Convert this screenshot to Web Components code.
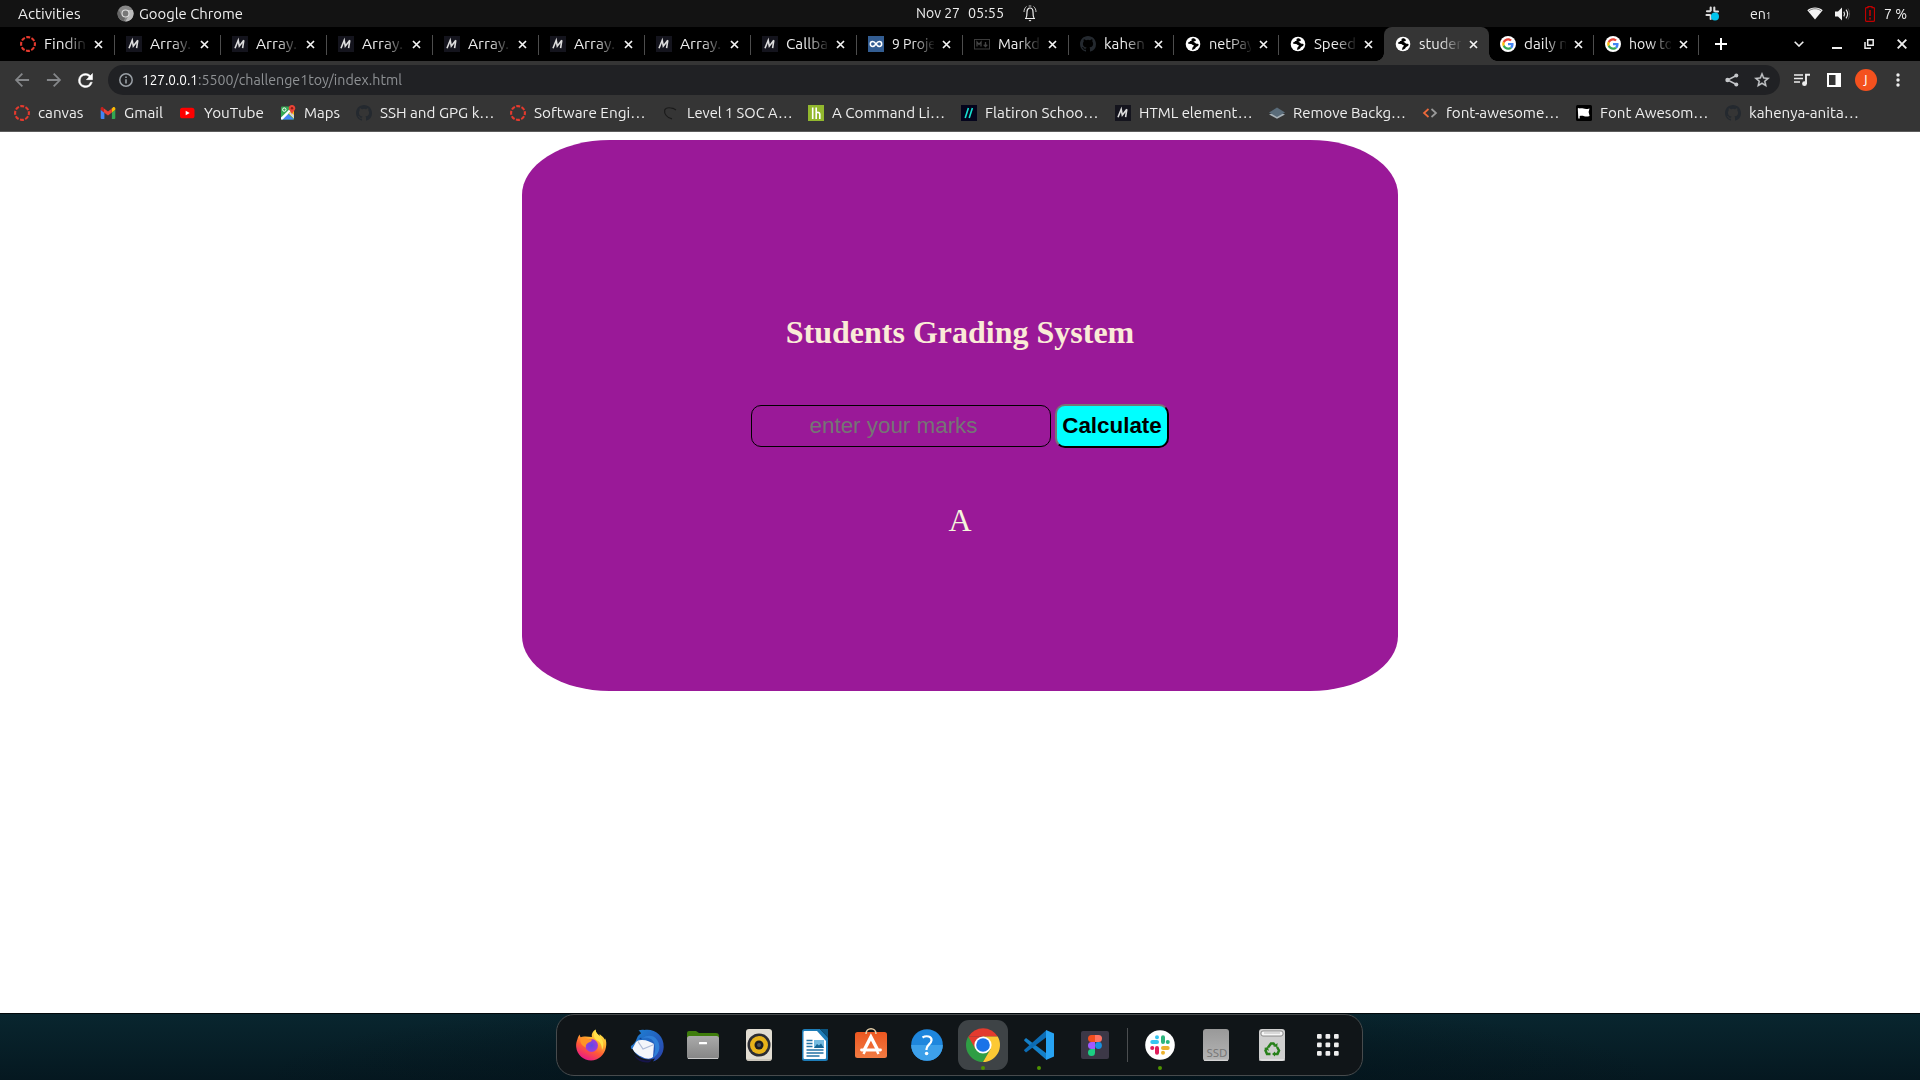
<!DOCTYPE html>
<html lang="en">
<head>
<meta charset="utf-8">
<title>Students Grading System</title>
<style>
html,body{margin:0;height:100%}
body{width:1920px;height:1080px;overflow:hidden;background:#fff;font-family:"Liberation Serif",serif}
</style>
</head>
<body>
<desk-top></desk-top>
<script>
const svg = (w,h,vb,body) => `<svg width="${w}" height="${h}" viewBox="${vb}">${body}</svg>`;

const ring = '<circle cx="8" cy="8" r="6.9" fill="none" stroke="#e63a2e" stroke-width="2.1" stroke-dasharray="4 1.42" stroke-dashoffset="2"/>';
const mdn = '<path fill="#14141d" d="M0 0h16v16H0z"/><path d="M3 12.200 6.200 4.300 7.300 10.200 11.800 4.300 10.600 12.200" fill="none" stroke="#ddd" stroke-width="1.600"/>';
const gh = '<path fill="#24292f" d="M8 0C3.58 0 0 3.58 0 8c0 3.54 2.29 6.53 5.47 7.59.4.07.55-.17.55-.38 0-.19-.01-.82-.01-1.49-2.01.37-2.53-.49-2.69-.94-.09-.23-.48-.94-.82-1.13-.28-.15-.68-.52-.01-.53.63-.01 1.08.58 1.23.82.72 1.21 1.87.87 2.33.66.07-.52.28-.87.51-1.07-1.78-.2-3.64-.89-3.64-3.95 0-.87.31-1.59.82-2.15-.08-.2-.36-1.02.08-2.12 0 0 .67-.21 2.2.82a7.5 7.5 0 0 1 4 0c1.53-1.04 2.2-.82 2.2-.82.44 1.1.16 1.92.08 2.12.51.56.82 1.27.82 2.15 0 3.07-1.87 3.75-3.65 3.95.29.25.54.73.54 1.48 0 1.07-.01 1.93-.01 2.2 0 .21.15.46.55.38A8 8 0 0 0 16 8c0-4.42-3.58-8-8-8z"/>';
const globe = '<circle cx="8" cy="8" r="7.3" fill="#fff"/><path fill="#000" d="M8.2 2.2c-1.4.1-2 .9-1.6 1.8.3.6-.4 1-1.3 1-.6.4-.4 1.2-1.6 1.3-.9.2-.9 1.1-.2 1.4l2.6.3c1.1.2 1.4 1.2 2.6 1.3.5.8-.4 1.4-1 2-.5.5-.3 1.7-.8 2.4 1.7.3 3.1-.7 3.8-2.2.5-1 2.1-1 2.8-2.3.5-1.6-.5-1.4-1.8-1.5-1.3-.1-1.5-1.3-2.6-1.4-.7-.1-.7-.9.2-1 .9 0 1.6-.6 1.6-1.4C10.300 2.900 9.200 2.200 8.200 2.200z"/>';
const google = '<circle cx="8" cy="8" r="8" fill="#fff"/><g transform="translate(2.200 2.200) scale(.242)"><path fill="#EA4335" d="M24 9.500c3.540 0 6.710 1.220 9.210 3.600l6.850-6.850C35.900 2.380 30.470 0 24 0 14.620 0 6.510 5.380 2.560 13.220l7.980 6.190C12.430 13.720 17.740 9.500 24 9.500z"/><path fill="#4285F4" d="M46.980 24.550c0-1.570-.15-3.090-.38-4.550H24v9.020h12.940c-.58 2.960-2.260 5.480-4.780 7.180l7.730 6c4.510-4.180 7.090-10.360 7.090-17.650z"/><path fill="#FBBC05" d="M10.530 28.590A14.500 14.500 0 0 1 9.770 24c0-1.600.27-3.140.76-4.590l-7.980-6.190A23.900 23.900 0 0 0 0 24c0 3.880.92 7.540 2.560 10.780z"/><path fill="#34A853" d="M24 48c6.480 0 11.930-2.130 15.890-5.810l-7.730-6c-2.150 1.450-4.920 2.300-8.160 2.300-6.260 0-11.570-4.220-13.470-9.910l-7.980 6.190C6.510 42.620 14.620 48 24 48z"/></g>';
const FAV = {
 ring, mdn, gh, globe, google,
 replit:'<path fill="#335d92" d="M0 0h16v16H0z"/><path d="M8 8C6.500 5.800 5.300 5.600 4.700 5.600a2.400 2.400 0 0 0 0 4.800C5.300 10.400 6.500 10.200 8 8s2.700-2.400 3.300-2.400a2.400 2.400 0 0 1 0 4.800C10.700 10.400 9.500 10.200 8 8z" fill="none" stroke="#fff" stroke-width="1.500"/>',
 md:'<rect x=".5" y="3.500" width="15" height="9.500" fill="none" stroke="#3c3c3c"/><path d="M3 10.500V6l2 2.500L7 6v4.500M11.500 6v4M9.700 8.700l1.800 1.900 1.800-1.900" fill="none" stroke="#444" stroke-width="1.300"/>',
 gmail:'<path fill="#4285f4" d="M1 14h2.700V7.400L0 4.700V13a1 1 0 0 0 1 1z" transform="translate(.7 0)"/><path fill="#34a853" d="M11.900 14h2.400a1 1 0 0 0 1-1V4.700l-3.400 2.700z"/><path fill="#fbbc04" d="M11.900 3.500v4l3.400-2.700V3.600c0-1.400-1.500-2-2.500-1.200z"/><path fill="#ea4335" d="M4 7.500V3.400l4 3 3.900-3v4.100L8 10.500z"/><path fill="#c5221f" d="M.7 3.600v1.200L4 7.500V3.400L3.200 2.400C2.100 1.700.7 2.300.7 3.600z"/>',
 yt:'<rect y="2.700" width="14.500" height="10.600" rx="2.600" fill="#f00"/><path fill="#fff" d="M5.700 5.700v4.600l4-2.300z"/>',
 maps:'<rect x="1" y="1.500" width="13" height="13" rx="1" fill="#34a853"/><path fill="#4285f4" d="m1 14.500 6.500-6 6.500 6z"/><path fill="#fff" d="m1 12.500 9-8.700 1.700 1.700-9 9H1z"/><path fill="#fbbc04" d="m8.500 8.500 5.500 5v-9l-3 2z"/><path fill="#d6d6d6" d="m9 8.700 5 5V10l-3-3z"/><circle cx="4.300" cy="4.600" r="1.700" fill="none" stroke="#fff"/><path fill="#ea4335" d="M12 0c2 0 3.300 1.500 3.300 3.200 0 2.400-2.900 3.300-3.300 6.600-.4-3.300-3.300-4.200-3.300-6.600C8.700 1.500 10 0 12 0z"/><circle cx="12" cy="3.200" r="1.200" fill="#8c1d18"/>',
 soc:'<path d="M13 5 10 3.300C6 2.400 2.500 2.700 1.700 5c-.9 3.500 2.500 8.200 7.300 8.900" fill="none" stroke="#1a1a1a" stroke-width="1.200"/>',
 lh:'<path fill="#92b82e" d="M0 0h16v16H0z"/><path d="M4.700 2.500v11.500M8.200 2.500v11.500M8.200 8.500c0-1.600 3.600-1.600 3.600.6v4.900" fill="none" stroke="#fff" stroke-width="1.600"/>',
 flat:'<path fill="#04041c" d="M0 0h16v16H0z"/><path d="M4.200 13 7.400 3M8.200 13l3.200-10" stroke="#16dfd0" stroke-width="1.600"/>',
 layers:'<path fill="#a9b2b8" d="m0 9.500 8 4.300 8-4.300-8-3z"/><path fill="#5a6c7a" d="m0 7.500 8-5 8 5L8 12z"/>',
 code:'<path d="M6.500 4 2 8l4.500 4" fill="none" stroke="#ef6a3b" stroke-width="1.700"/><path d="m9.500 4 4.500 4-4.500 4" fill="none" stroke="#9b9b9b" stroke-width="1.700"/>',
 fa:'<rect width="16" height="16" rx="1.500" fill="#000"/><path fill="#fff" d="M1.800 3.600a1 1 0 0 1 1.900 0c3-1.100 4.300 1.400 9.800-.1L12.600 7l1 4c-4.500 1.700-6.100-1.100-9.900.1v2.400H2.300z"/>'
};

const X = svg(9,9,'0 0 9 9','<path d="m1 1 7 7M8 1 1 8" stroke="#f4f4f4" stroke-width="1.700"/>');

class FitText extends HTMLElement {
  connectedCallback(){
    if(this.shadowRoot) return;
    const w = +this.getAttribute('w');
    this.attachShadow({mode:'open'}).innerHTML =
     `<style>:host{display:block;flex:none;width:${w}px;white-space:pre;font:14.500px/20px Ubuntu,"Noto Sans",sans-serif}
      span{display:inline-block;transform-origin:0 50%}</style><span><slot></slot></span>`;
    const s = this.shadowRoot.querySelector('span');
    s.style.transform = `scaleX(${w / s.getBoundingClientRect().width})`;
  }
}
const comp = (name, html) => customElements.define(name, class extends HTMLElement {
  connectedCallback(){
    if(this.shadowRoot) return;
    this.attachShadow({mode:'open'}).innerHTML = typeof html==='function' ? html(this) : html;
  }
});

comp('grade-card', `<style>
:host{display:block;width:1920px;height:881px;background:#fff;padding-top:8px;box-sizing:border-box}
.card{width:876px;height:551px;margin:0 auto;border-radius:10%;background:#9a1998;display:flex;flex-direction:column;align-items:center;box-sizing:border-box;padding-top:174px}
h1{font:bold 32px/37px "Liberation Serif",serif;color:#faebd7;margin:0}
.row{display:flex;align-items:center;gap:4px;margin-top:53px;height:44px}
input{box-sizing:border-box;width:300px;height:42px;border:1px solid #000;border-radius:10px;background:transparent;text-align:center;font:22.400px "Liberation Sans",sans-serif;padding:1px 2px;outline:0}
input::placeholder{color:#757575}
button{box-sizing:border-box;height:44px;background:#0ff;color:#000;border:2px outset #767676;border-color:#767676 #212121 #212121 #767676;border-radius:10px;font:bold 22.400px "Liberation Sans",sans-serif;padding:1px 5px;margin:0;width:114px;white-space:nowrap}
p{margin:54px 0 0;font:32px/37px "Liberation Serif",serif;color:#f5f5dc}
</style><div class="card"><h1>Students Grading System</h1><div class="row"><input type="number" placeholder="enter your marks"><button>Calculate</button></div><p>A</p></div>`);

comp('top-bar', `<style>
:host{display:flex;align-items:center;height:27px;width:1920px;background:#131313;color:#eee;box-sizing:border-box;padding:0 13px 0 18px}
div{display:flex;align-items:center;height:27px} svg{display:block;flex:none}
.l{width:898px}.c{width:130px;padding-bottom:1px;box-sizing:border-box}.r{margin-left:auto}
</style>
<div class="l"><fit-text w="62.500">Activities</fit-text><span style="width:36px"></span>${svg(17,17,'0 0 17 17','<circle cx="8.500" cy="8.500" r="8" fill="#888"/><path fill="#bbb" d="M8.500 5h7.300a8 8 0 0 1-7.500 11.500l3.500-6z"/><path fill="#666" d="M1.500 4.500 5 11l3.500 1-2 4.300A8 8 0 0 1 1.500 4.500z"/><circle cx="8.500" cy="8.500" r="4" fill="#ddd"/><circle cx="8.500" cy="8.500" r="2.900" fill="#777"/>')}<fit-text w="104" style="margin-left:5.500px">Google Chrome</fit-text></div>
<div class="c"><fit-text w="44">Nov 27</fit-text><fit-text w="36" style="margin-left:8px">05:55</fit-text><span style="width:19px"></span>${svg(14,17,'0 0 14 17','<path d="M2 13.500h10M3 13c1-1.500 1-3 1-6 0-2.500 1.500-4 3-4s3 1.500 3 4c0 3 0 4.500 1 6" fill="none" stroke="#eee" stroke-width="1.200"/><path d="M5.500 15h3L7 16.500z" fill="#eee"/><path d="M3.500 1.500C2 2.500 1 4.500 1 7M10.500 1.500C12 2.500 13 4.500 13 7M5.700 1h2.600" fill="none" stroke="#ccc"/>')}</div>
<div class="r">${svg(15,15,'0 0 15 15','<g stroke="#ddd" stroke-width="2.100" stroke-linecap="round"><path d="M5.700 1.500v3M9.300 1.500v3.500M13 5.500h-2.500M2 5.200h3M1.500 9h3.500M5.700 9.500V13"/></g><circle cx="10" cy="10.500" r="4" fill="#00c4ec"/>')}
<fit-text w="16" style="margin-left:30px">en</fit-text><fit-text w="5" style="font-size:10px;margin-top:4px">1</fit-text>
<span style="width:36px"></span>${svg(16,13,'0 0 16 13','<path d="M8 12.500.3 3.200C4.500-.5 11.500-.5 15.700 3.200z" fill="#f2f2f2"/><path d="M1.800 4C5.500 1 10.500 1 14.200 4" fill="none" stroke="#555" stroke-width=".7"/>')}
<span style="width:12px"></span>${svg(15,14,'0 0 15 14','<path fill="#f2f2f2" d="M0 4.500h3L7 .5v13l-4-4H0z"/><path d="M8.800 4.700c1 1.500 1 3.100 0 4.600M11 2.700c2 2.700 2 5.900 0 8.600" fill="none" stroke="#e8e8e8" stroke-width="1.200"/><path d="M13 1.500c2 3.500 2 7.500 0 11" fill="none" stroke="#555"/>')}
<span style="width:15px"></span>${svg(10,16,'0 0 10 16','<path d="M3 1.700V.7h4v1h1.500q1 0 1 1v11.600q0 1-1 1h-7q-1 0-1-1V2.700q0-1 1-1z" fill="none" stroke="#c00000" stroke-width="1.200"/><path d="M5 4v6M5 11.500v2" stroke="#c00000" stroke-width="1.600"/>')}
<fit-text w="23" style="margin-left:9px">7 %</fit-text></div>`);

comp('browser-tab', el => { const a = el.hasAttribute('active'), n = el.hasAttribute('nosep'); return `<style>
:host{display:flex;align-items:center;box-sizing:border-box;height:34px;flex:none;width:${el.getAttribute('w')}px;padding-left:11px;color:#eee;position:relative;${a?'background:#353535;border-radius:8px 8px 0 0;':''}}
svg{display:block;flex:none}
.t{width:42px;margin:0 8px 0 8px;overflow:hidden;-webkit-mask:linear-gradient(90deg,#000 50%,rgba(0,0,0,.08) 100%)}
:host::after{content:"";position:absolute;right:0;top:8px;width:1px;height:20px;background:${a||n?'transparent':'#4d4d4d'}}
${a?':host::before{content:"";position:absolute;left:-8px;right:-8px;bottom:0;height:8px;background:radial-gradient(circle at 0 0,transparent 7.500px,#353535 8px) 0 0/8px 8px no-repeat,radial-gradient(circle at 100% 0,transparent 7.500px,#353535 8px) 100% 0/8px 8px no-repeat}':''}
</style>${svg(16,16,'0 0 16 16',FAV[el.getAttribute('icon')])}<div class="t"><fit-text w="${el.getAttribute('tw')}"><slot></slot></fit-text></div>${X}`});

const tabs=[['ring','Findin',42],...Array(6).fill(['mdn','Array.',41]),['mdn','Callba',42],['replit','9 Proje',44],['md','Markd',42],['gh','kahen',41],['globe','netPay',45],['globe','Speed',42],['globe','studen',46],['google','daily n',44],['google','how to',44]];
comp('tab-strip', `<style>
:host{display:flex;align-items:center;background:#000;height:34px;width:1920px;box-sizing:border-box;padding-left:9px}
svg{display:block;flex:none}
.w{display:flex;align-items:center;margin-left:auto;padding-right:13px}
</style>${tabs.map((t,i)=>`<browser-tab w="${i<10?106:105}" icon="${t[0]}" tw="${t[2]}" ${i==13?'active':i==12?'nosep':''}>${t[1]}</browser-tab>`).join('')}
${svg(12,12,'0 0 12 12','<path d="M6 0v12M0 6h12" stroke="#fff" stroke-width="2"/>').replace('<svg','<svg style="margin-left:16px"')}
<div class="w">${svg(10,6,'0 0 10 6','<path d="m.7.7 4.300 4.300L9.300.7" fill="none" stroke="#eee" stroke-width="1.600"/>')}
<span style="width:28px"></span>${svg(10,14,'0 0 10 14','<path d="M0 11h10" stroke="#eee" stroke-width="2"/>')}
<span style="width:22px"></span>${svg(10,10,'0 0 10 10','<path d="M3.700.8h5.500v5.500H3.700zM1 3v6.200h6" fill="none" stroke="#eee" stroke-width="1.500"/>')}
<span style="width:23px"></span>${svg(10,10,'0 0 10 10','<path d="m.7.700 8.600 8.600M9.300.700.700 9.300" stroke="#eee" stroke-width="1.900"/>')}</div>`);

comp('nav-bar', `<style>
:host{display:flex;align-items:center;background:#353535;height:38px;width:1920px;box-sizing:border-box;padding:0 0 0 12px}
svg,span{display:block;flex:none}
.o{display:flex;flex:none;align-items:center;box-sizing:border-box;width:1672px;height:30px;border-radius:15px;background:#202124;margin-left:12px;padding:0 9px 0 11px;color:#8f9295}
.s{margin-left:auto;display:flex;align-items:center;gap:14px}
.a{flex:none;width:22px;height:22px;border-radius:50%;background:#f4511e;color:#fff;font:12px/22px "Noto Sans",sans-serif;text-align:center;margin:0 11px 0 14px}
</style>
${svg(20,20,'0 0 24 24','<path fill="#85878a" d="M20.500 10.800H7.400l5.800-5.700L11.600 3.500 3.400 12l8.200 8.500 1.600-1.600-5.800-5.800h13.100z"/>')}
<span style="width:12px"></span>${svg(20,20,'0 0 24 24','<path fill="#85878a" d="M3.500 10.800h13.100l-5.800-5.700 1.600-1.600 8.200 8.500-8.200 8.500-1.600-1.600 5.800-5.800H3.500z"/>')}
<span style="width:11px"></span>${svg(21,21,'0 0 24 24','<path fill="#fff" d="M17.650 6.350A7.950 7.950 0 0 0 12 4a8 8 0 1 0 7.730 10h-2.080A6 6 0 1 1 12 6c1.660 0 3.140.69 4.220 1.780L13 11h7V4z" stroke="#fff" stroke-width=".6"/>')}
<div class="o">${svg(14,14,'0 0 14 14','<circle cx="7" cy="7" r="6.200" fill="none" stroke="#9aa0a6" stroke-width="1.500"/><path d="M7 6.200v4.300M7 3.500v1.600" stroke="#9aa0a6" stroke-width="1.600"/>')}
<fit-text w="56" style="color:#fff;margin-left:9px">127.0.0.1</fit-text><fit-text w="204">:5500/challenge1toy/index.html</fit-text>
<div class="s">${svg(14,14,'0 0 14 14','<path d="M11.500 2.500 2.500 7l9 4.500" fill="none" stroke="#c5c7ca" stroke-width="1.400"/><g fill="#c5c7ca"><circle cx="11.300" cy="2.500" r="2"/><circle cx="2.500" cy="7" r="2.200"/><circle cx="11.300" cy="11.500" r="2"/></g>')}
${svg(18,18,'0 0 24 24','<path fill="#c5c7ca" d="m22 9.240-7.190-.62L12 2 9.190 8.630 2 9.240l5.460 4.730L5.820 21 12 17.270 18.180 21l-1.630-7.030zM12 15.400l-3.760 2.270 1-4.280-3.320-2.880 4.380-.38L12 6.100l1.710 4.040 4.380.38-3.320 2.880 1 4.280z" stroke="#c5c7ca" stroke-width=".5"/>')}</div></div>
<span style="width:14px"></span>${svg(16,14,'0 0 16 14','<path d="M0 2h9M0 5.500h9M0 9h6" stroke="#eee" stroke-width="1.700"/><path d="M12 11V1.800h4" fill="none" stroke="#eee" stroke-width="1.900"/><circle cx="10.500" cy="10.700" r="2.400" fill="#eee"/>')}
<span style="width:17px"></span>${svg(14,14,'0 0 14 14','<path fill="#fff" d="M0 0h14v14H0zM2 2v10h6.500V2z" fill-rule="evenodd"/>')}
<div class="a">J</div>${svg(20,14,'0 0 20 14','<g fill="#eee"><circle cx="10" cy="2" r="1.700"/><circle cx="10" cy="7" r="1.700"/><circle cx="10" cy="12" r="1.700"/></g>')}`);

const marks=[['ring','canvas',14,45.500],['gmail','Gmail',100,39],['yt','YouTube',179.500,60],['maps','Maps',279.500,36],['gh','SSH and GPG k…',356,114.500],['ring','Software Engi…',510,111.500],['soc','Level 1 SOC A…',662.500,105.500],['lh','A Command Li…',808,113],['flat','Flatiron Schoo…',961,113.500],['mdn','HTML element…',1115,113.500],['layers','Remove Backg…',1269,113],['code','font-awesome…',1422,113.500],['fa','Font Awesom…',1576,108.500],['gh','kahenya-anita…',1725,110]];
comp('book-mark', el=>`<style>:host{display:flex;align-items:center;gap:8px;flex:none;color:#eee;width:${el.getAttribute('w')}px}svg{display:block;flex:none}</style>${svg(16,16,'0 0 16 16',FAV[el.getAttribute('icon')])}<fit-text w="${el.getAttribute('tw')}"><slot></slot></fit-text>`);
comp('bookmark-bar', `<style>:host{display:flex;align-items:center;background:#353535;height:33px;width:1920px;box-sizing:border-box;padding:0 0 4px 14px;border-bottom:1px solid #5c5c5c}</style>${marks.map((m,i)=>`<book-mark w="${(marks[i+1]||[0,0,1880])[2]-m[2]}" icon="${m[0]}" tw="${m[3]}">${m[1]}</book-mark>`).join('')}`);

const D = {
firefox:'<defs><linearGradient id="f1" x1=".8" y1="0" x2=".3" y2="1"><stop offset="0" stop-color="#fff44f"/><stop offset=".35" stop-color="#ffb02e"/><stop offset=".65" stop-color="#ff5a36"/><stop offset="1" stop-color="#e8158c"/></linearGradient><radialGradient id="f2"><stop offset="0" stop-color="#5b4be8"/><stop offset="1" stop-color="#a23ad8"/></radialGradient></defs><path fill="url(#f1)" d="M2.500 10C3 7.500 4 6.500 4.800 5.500c0 1.500.4 2.300 1 2.700C7 7.400 9 7.300 10.500 7.500L17 8c-.8-3 1-6 3.500-7.500 0 3 2 4.500 4 6.500.2-.8.100-1.500 0-2 3 2.500 4.700 3.500 5 5.500.4-.2.500-.8.500-1.200C31.500 12 31.500 15 31 18c-1.300 8-7.700 13.500-15 13.500S2 26 1.200 18C.9 15 1.500 12.500 2.500 10z"/><circle cx="16.500" cy="16.500" r="6.500" fill="url(#f2)"/><path fill="#ff9426" d="M5.500 9.500c3-2 6-1 8 1.200 1.200-.6 3-.4 3.500 0-.8 2.300-3 2.500-4.500 3.500-1.600 1.100-2 2.500-1.500 4.500-3-1.500-6.500-4-5.500-9.200z"/><path fill="#ffe14a" d="M20.500.5c0 3 2 4.500 4 6.500 4 4 5 9 2.500 14 0-5-2-8.500-5.500-10C18 9 18.500 4 20.500.5z"/>',
bird:'<defs><linearGradient id="b1" x1="0" y1="0" x2="1" y2="1"><stop offset="0" stop-color="#1d86d8"/><stop offset="1" stop-color="#2a3fa8"/></linearGradient></defs><path fill="url(#b1)" d="M7.500 1.500c2-.6 3.500-1 6-.5C24-.500 33 7 32.700 18c-.2 7-4.700 13-10.700 14.500l2-3C15 33 4 27 2 20c-1.500 1-2.500-1-2-3 3-2 4.500-4 6-8 .8-2.500 3-4 4-4.500C9.500 3 8.500 2 7.500 1.500z"/><path fill="#f3f5fa" d="M5 13c1-1.300 3-1.800 5-2 5-.4 9 1.500 13 4l-1 13c-2 2-5 2-8 1.200C8 27 3 23.500 1.500 19.500z"/><path d="m7 12.500 5 7.500 11-4.500" fill="none" stroke="#aebbd8" stroke-width="1.200"/><path fill="#2f7fd8" d="M12 9c6-1 10 1 11.500 6 1.500 6 0 10-2 14 8-4 9-14 3-20-3-3-9-3-12.500 0z"/><path fill="#17154a" d="M3 26c3 3 7 5 12 5.500 3 .3 5-.5 6-1.500-1 3-3 3.500-5 3.500-6 0-11-3-13-7.500z"/><path fill="#103f91" d="m8 10 2-1.500.800 2z"/>',
files:'<path fill="#3f7d0c" d="M0 4q0-2 2-2h7l3 2h17q3 0 3 3v12H0z"/><defs><linearGradient id="g1" x1="0" y1="0" x2="0" y2="1"><stop offset="0" stop-color="#aaa"/><stop offset="1" stop-color="#858585"/></linearGradient></defs><rect y="7" width="32" height="23" rx="2.500" fill="url(#g1)"/><path d="M1 29.500h30" stroke="#c9c9c9"/><rect x="12" y="13" width="8" height="2.300" rx=".5" fill="#fff"/>',
music:'<rect x="3" width="26" height="32" rx="3" fill="#e2ddd2"/><path d="M4 31h24" stroke="#b5b0a5"/><circle cx="16" cy="16" r="11.500" fill="#2c2d33"/><circle cx="16" cy="16" r="9" fill="#e8b31a"/><circle cx="16" cy="16" r="4.500" fill="#1b1c20"/><circle cx="16" cy="16" r="2" fill="#4d5058"/>',
writer:'<path fill="#1e7db8" d="M5.500 0H21l8 8.500V29.500q0 2.500-2.500 2.500h-21Q3 32 3 29.500v-27Q3 0 5.500 0z"/><path fill="#0c5580" d="M21 0h8v8.500z"/><path fill="#fff" d="M5.500 2H18l9 10v17q0 1-1 1H5.500q-1 0-1-1V3q0-1 1-1z"/><path d="M7.500 11.500h6M7.500 14.500h6M7.500 17.500h6M7.500 21h17M7.500 24h17M7.500 27h13" stroke="#2473a5" stroke-width="1.500"/><rect x="15" y="11" width="10" height="8" fill="#75bbe0"/><path fill="#146494" d="m15 19 3-4 2 1.500 2-2 3 4.500z"/>',
store:'<defs><linearGradient id="s1" x1="0" y1="0" x2="0" y2="1"><stop offset="0" stop-color="#ec5720"/><stop offset="1" stop-color="#f27b43"/></linearGradient></defs><rect y="3" width="32" height="26" rx="2.500" fill="url(#s1)"/><path d="M11 5c0-7 10-7 10 0" fill="none" stroke="#e7cfa9" stroke-width="1.600"/><path d="M9.500 20.500 15.900 8l6.500 12.500" fill="none" stroke="#fff" stroke-width="3.400"/><path d="M6.500 21h19" stroke="#fff" stroke-width="2.800" stroke-linecap="round"/><path d="m10 22-1.500 3M22 22l1.500 3" stroke="#fff" stroke-width="2.500"/>',
help:'<circle cx="16" cy="16" r="15.800" fill="#1e86dd"/><path fill="#3da0ea" d="M.2 16h31.600a15.800 15.800 0 0 1-31.600 0z"/><path d="M11.500 8.500c4-2.500 9.500-1 9 3-.3 3.500-5 4.500-5 8.500v1" fill="none" stroke="#fff" stroke-width="2.200"/><circle cx="15.600" cy="24.500" r="1.800" fill="#fff"/>',
chrome:'<path fill="#e33b2e" d="M1.500 7.500a17 17 0 0 1 29.200 0H16z"/><path fill="#2f9e44" d="M1.280 7.500A17 17 0 0 0 16 33l7.500-13z"/><path fill="#fcc934" d="M30.720 7.500A17 17 0 0 1 16 33l7.400-12.700L16 7.500z"/><path fill="#e33b2e" d="M1.280 7.500 8.600 20.200 16 7.500z"/><circle cx="16" cy="16" r="8.600" fill="#fff"/><circle cx="16" cy="16" r="6.800" fill="#1a73e8"/>',
code:'<path fill="#1480c8" d="m1 11 2-2 20 15v6.500L1.500 12z"/><path fill="#0c6cb4" d="m1 21.500 2 2L23 8.500V1.500L1.500 20.500z"/><path fill="#27a3f3" d="m23 1 8 3.500v23L23 31z"/>',
figma:'<rect x="2" y="2" width="28" height="28" rx="2" fill="#3c3847"/><path fill="#f24e1e" d="M16 6h-3.500a3.500 3.500 0 0 0 0 7H16z"/><path fill="#ff7262" d="M16 6h3.500a3.500 3.500 0 0 1 0 7H16z"/><path fill="#a259ff" d="M16 13h-3.500a3.500 3.500 0 0 0 0 7H16z"/><circle cx="19.500" cy="16.500" r="3.400" fill="#1890e0"/><path fill="#1ccf82" d="M16 20h-3.500a3.500 3.500 0 1 0 3.500 3.500z"/>',
slack:'<circle cx="16" cy="16" r="14.800" fill="#fff"/><g stroke-width="4" stroke-linecap="round"><path stroke="#36c5f0" d="M8.300 13h4.700M13 8.200v.1"/><path stroke="#2eb67d" d="M19 8.300V13M23.800 13h-.1"/><path stroke="#ecb22e" d="M23.700 19H19M19 23.800v-.1"/><path stroke="#e01e5a" d="M13 23.700V19M8.200 19h.1"/></g>',
ssd:'<defs><linearGradient id="d1" x1="0" y1="0" x2="0" y2="1"><stop offset="0" stop-color="#999"/><stop offset="1" stop-color="#b4b4b4"/></linearGradient></defs><rect x="3" width="26" height="32" rx="3" fill="url(#d1)"/><path d="M4 31.300h24" stroke="#ddd"/><text x="6.500" y="27.500" textLength="21" lengthAdjust="spacingAndGlyphs" font-family="Noto Sans,sans-serif" font-size="11" fill="#777">SSD</text>',
trash:'<rect x="3" width="26" height="32" rx="3" fill="#cfcfcf"/><path d="M3 31h26" stroke="#eee"/><rect x="5" y="2" width="22" height="5" rx="2" fill="#f6f6f6" stroke="#777" stroke-width=".8"/><path d="M8 4h16" stroke="#bbb"/><g fill="none" stroke="#27801a" stroke-width="2.500"><path d="m12 18.500 3-4h2.500l1.500 2M21 18l2 3.500-1.500 3.500h-3.500M14.500 25h-3.500l-1.500-3.500 1-2"/></g><path fill="#27801a" d="m17.300 17.500 4 .5.200-4zM19 22.500v5l-3-2.500zM8 19l4-1 .800 4z"/>',
apps:'<g fill="#eee">'+[5,13.500,22].flatMap(y=>[5,13.500,22].map(x=>`<rect x="${x}" y="${y}" width="4.700" height="4.700" rx="1"/>`)).join('')+'</g>'
};
comp('dock-item', el=>`<style>
:host{display:flex;flex:none;width:56px;height:60px;align-items:center;justify-content:center}
div{display:flex;align-items:center;justify-content:center;position:relative;width:50px;height:50px;border-radius:11px;${el.hasAttribute('on')?'background:#3e4346;':''}}
svg{display:block;overflow:visible}
i{position:absolute;left:23px;bottom:0;width:4px;height:4px;border-radius:50%;background:#4e9200}
</style><div>${svg(32,32,'0 0 32 32',D[el.getAttribute('icon')])}${el.hasAttribute('run')?'<i></i>':''}</div>`);
comp('app-dock', `<style>
:host{display:flex;justify-content:center;width:1920px;height:67px;box-sizing:border-box;padding-top:1px;background:radial-gradient(ellipse 700px 90px at 50% 100%,#04131a,transparent),linear-gradient(#09262f,#051820);box-shadow:inset 0 1px #02090c}
.p{display:flex;box-sizing:border-box;width:807px;height:62px;margin-right:1px;align-items:center;border:1px solid #474b4d;border-radius:18px;background:#101518;padding:0 6px}
.s{flex:none;width:1px;height:34px;background:#4b4e50;margin:0 4px}
</style><div class="p">${['firefox','bird','files','music','writer','store','help'].map(i=>`<dock-item icon="${i}"></dock-item>`).join('')}<dock-item icon="chrome" on run></dock-item><dock-item icon="code" run></dock-item><dock-item icon="figma"></dock-item><span class="s"></span><dock-item icon="slack" run></dock-item><dock-item icon="ssd"></dock-item><dock-item icon="trash"></dock-item><dock-item icon="apps"></dock-item></div>`);

comp('desk-top', `<style>:host{display:flex;flex-direction:column;width:1920px;height:1080px}</style><top-bar></top-bar><tab-strip></tab-strip><nav-bar></nav-bar><bookmark-bar></bookmark-bar><grade-card></grade-card><app-dock></app-dock>`);
customElements.define('fit-text', FitText);
</script>
</body>
</html>
